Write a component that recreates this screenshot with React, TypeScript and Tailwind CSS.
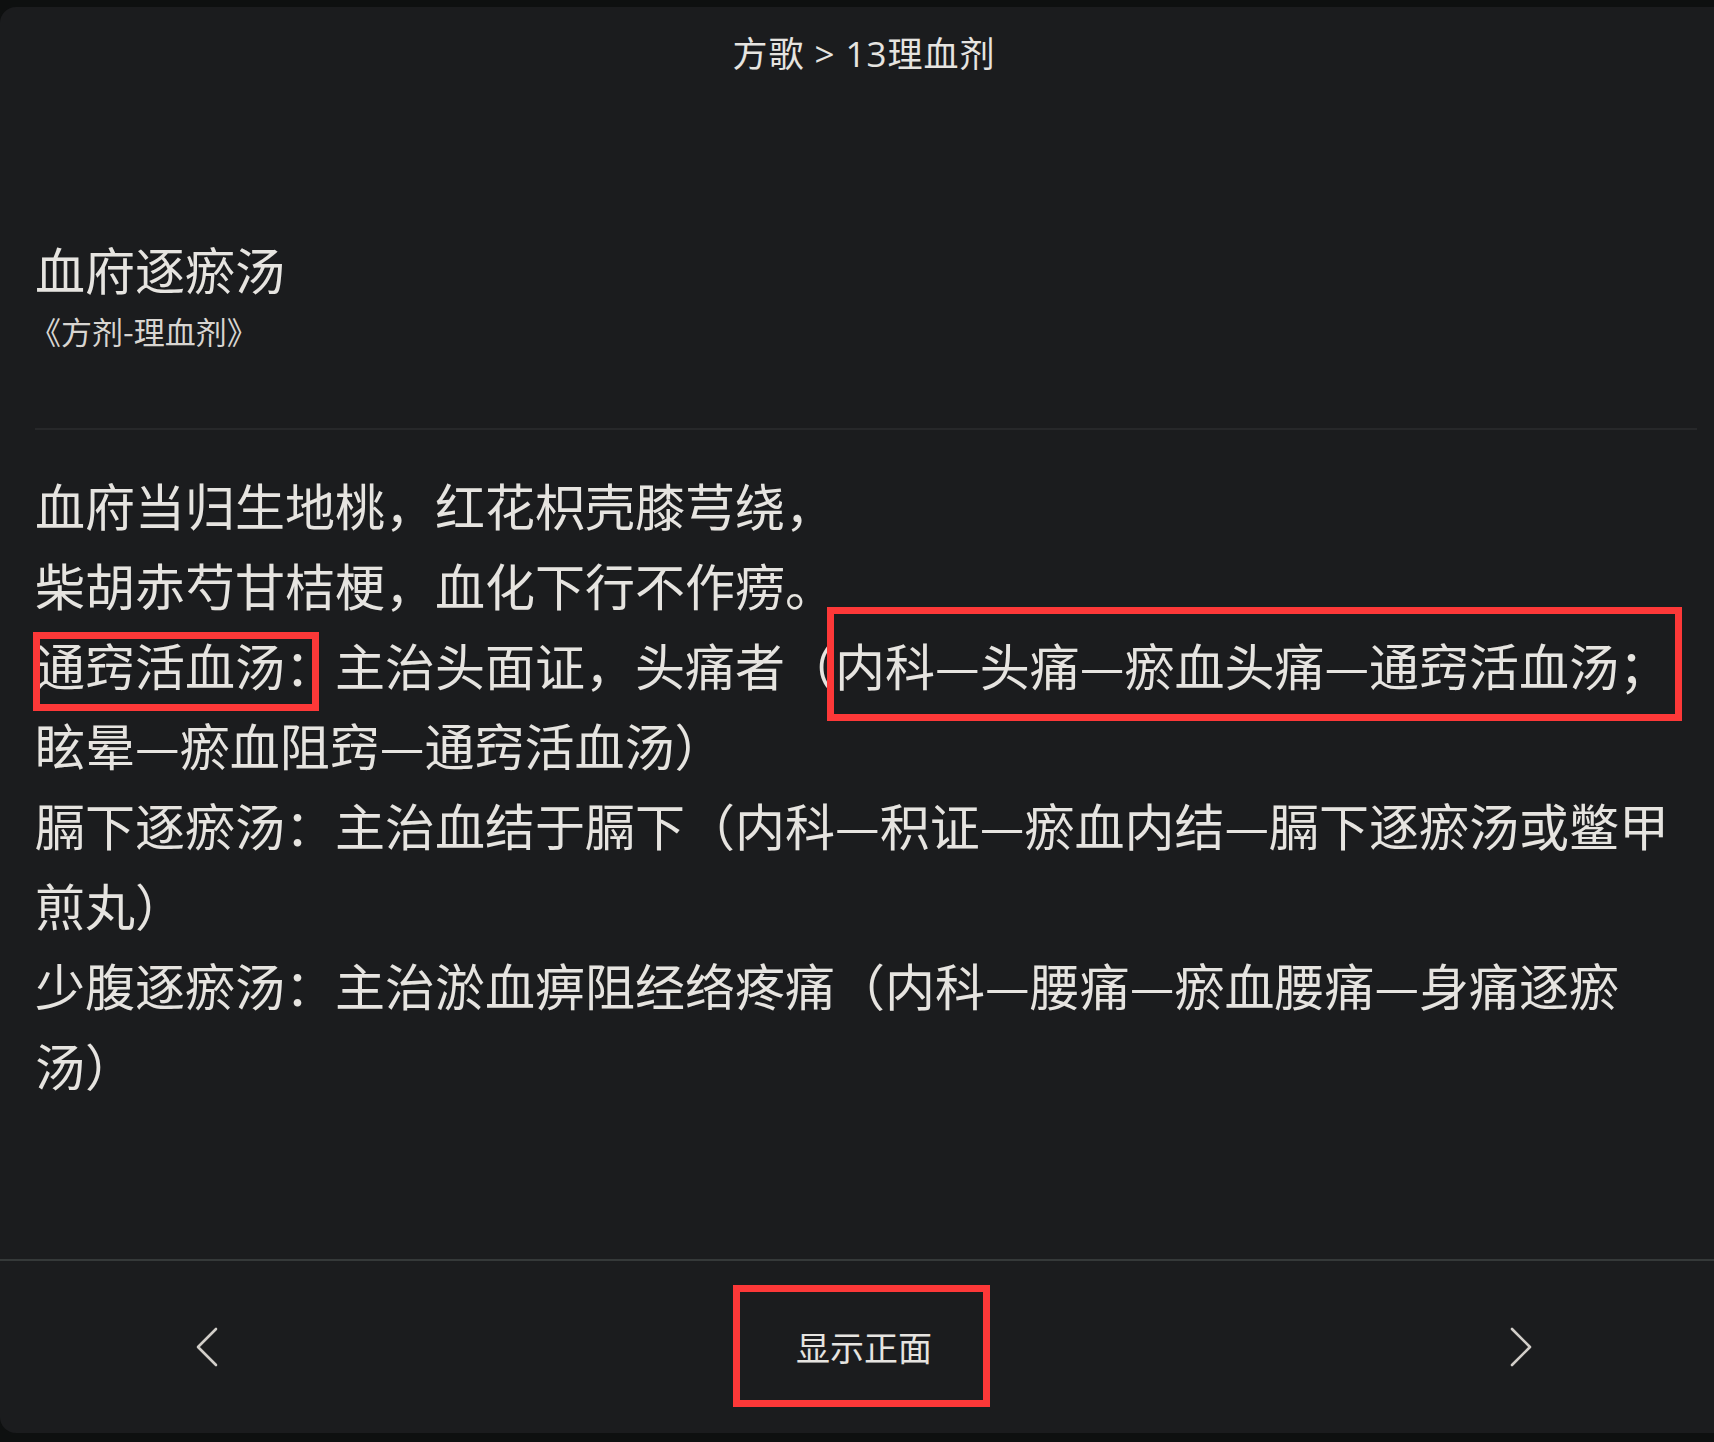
const cjk = '[font-family:"Noto_Sans_CJK_SC","Noto_Sans",sans-serif]';

const poem = ['血府当归生地桃，红花枳壳膝芎绕，', '柴胡赤芍甘桔梗，血化下行不作痨。'];

const notes = [
  '通窍活血汤：主治头面证，头痛者（内科—头痛—瘀血头痛—通窍活血汤；眩晕—瘀血阻窍—通窍活血汤）',
  '膈下逐瘀汤：主治血结于膈下（内科—积证—瘀血内结—膈下逐瘀汤或鳖甲煎丸）',
  '少腹逐瘀汤：主治淤血痹阻经络疼痛（内科—腰痛—瘀血腰痛—身痛逐瘀汤）',
];

function Chevron({ dir }: { dir: 'left' | 'right' }) {
  return (
    <svg width="24" height="40" viewBox="0 0 24 40" fill="none" stroke="currentColor" strokeWidth={2.6} strokeLinecap="round" strokeLinejoin="round">
      {dir === 'left' ? <polyline points="21,2 3,20 21,38" /> : <polyline points="3,2 21,20 3,38" />}
    </svg>
  );
}

export default function App() {
  return (
    <div className="w-[1714px] h-[1442px] overflow-hidden bg-[#0e1010] pt-[7px]">
      <div
        className={`relative w-[1728px] h-[1426px] rounded-l-[16px] bg-[#1b1c1e] text-[#e6e4e0] flex flex-col [text-spacing-trim:space-all] ${cjk}`}
      >
        {/* Breadcrumb */}
        <header className="pt-[23px] flex justify-center">
          <p className="text-[35px] leading-[48px] tracking-[1px] [font-family:'Open_Sans','Noto_Sans_CJK_SC',sans-serif]">
            方歌 &gt; 13理血剂
          </p>
        </header>

        {/* Title */}
        <div className="pl-[35px] pr-[31px] mt-[160px]">
          <h1 className="text-[50px] leading-[60px] font-normal">血府逐瘀汤</h1>
          <p className="mt-[12px] text-[31px] leading-[41px] text-[#d8d5d1] -ml-[5px]">《方剂-理血剂》</p>
          <div className="mt-[77px] h-[2px] bg-[#27282a]" />
        </div>

        {/* Back content */}
        <main className="flex-1 pl-[35px] pr-[31px] pt-[34px]">
          <div className="text-[50px] leading-[80px]">
            {poem.map((line) => (
              <p key={line}>{line}</p>
            ))}
            {notes.map((n) => (
              <p key={n}>{n}</p>
            ))}
          </div>
        </main>

        {/* Footer nav */}
        <footer className="h-[174px] border-t-2 border-[#353939] flex items-center justify-between px-[195px]">
          <button className="w-[24px] h-[40px] flex items-center justify-center text-[#d2cec9]">
            <Chevron dir="left" />
          </button>
          <button className="text-[34px] leading-[48px] px-[60px] py-[30px] text-[#e6e4e0]">显示正面</button>
          <button className="w-[24px] h-[40px] flex items-center justify-center text-[#d2cec9]">
            <Chevron dir="right" />
          </button>
        </footer>

        {/* Red annotation boxes */}
        <div className="absolute left-[33px] top-[625px] w-[286px] h-[79px] border-[7px] border-[#fd3838] pointer-events-none" />
        <div className="absolute left-[827px] top-[600px] w-[855px] h-[114px] border-[7px] border-[#fd3838] pointer-events-none" />
        <div className="absolute left-[733px] top-[1278px] w-[257px] h-[122px] border-[7px] border-[#fd3838] pointer-events-none" />
      </div>
    </div>
  );
}
